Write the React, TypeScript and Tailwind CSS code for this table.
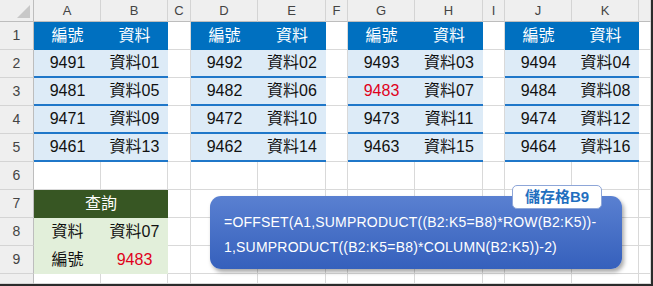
import React from 'react'

const COLS = ['', 'A', 'B', 'C', 'D', 'E', 'F', 'G', 'H', 'I', 'J', 'K', '']

const tables = [
  { col: 1, rows: [['9491', '資料01'], ['9481', '資料05'], ['9471', '資料09'], ['9461', '資料13']] },
  { col: 4, rows: [['9492', '資料02'], ['9482', '資料06'], ['9472', '資料10'], ['9462', '資料14']] },
  { col: 7, rows: [['9493', '資料03'], ['9483', '資料07'], ['9473', '資料11'], ['9463', '資料15']] },
  { col: 10, rows: [['9494', '資料04'], ['9484', '資料08'], ['9474', '資料12'], ['9464', '資料16']] },
]

const font = { fontFamily: '"Liberation Sans", "Noto Sans CJK TC", sans-serif' }

type CellInfo = { text?: string; kind: 'plain' | 'head' | 'data' | 'qhead' | 'qdata'; red?: boolean; span?: number; skip?: boolean }

function cellAt(r: number, c: number): CellInfo {
  // r = sheet row (1..10), c = column index (1..12)
  for (const t of tables) {
    if (c === t.col || c === t.col + 1) {
      const i = c - t.col
      if (r === 1) return { text: i === 0 ? '編號' : '資料', kind: 'head' }
      if (r >= 2 && r <= 5) {
        const txt = t.rows[r - 2][i]
        return { text: txt, kind: 'data', red: txt === '9483' }
      }
    }
  }
  if (r === 7 && c === 1) return { text: '查詢', kind: 'qhead', span: 2 }
  if (r === 7 && c === 2) return { kind: 'qhead', skip: true }
  if (r === 8 && c === 1) return { text: '資料', kind: 'qdata' }
  if (r === 8 && c === 2) return { text: '資料07', kind: 'qdata' }
  if (r === 9 && c === 1) return { text: '編號', kind: 'qdata' }
  if (r === 9 && c === 2) return { text: '9483', kind: 'qdata', red: true }
  return { kind: 'plain' }
}

const kindClass: Record<CellInfo['kind'], string> = {
  plain: 'bg-white border-r border-b border-[#d9d9d9]',
  head: 'bg-[#0070c0] text-white',
  data: 'bg-[#ddebf7] text-[#111] border-b-2 border-[#1f77c9]',
  qhead: 'bg-[#375623] text-white',
  qdata: 'bg-[#e2efda] text-[#111]',
}

export default function App() {
  const rows = [1, 2, 3, 4, 5, 6, 7, 8, 9, 10]

  return (
    <div className="relative w-[653px] h-[286px] overflow-hidden bg-white border-r-2 border-b-2 border-[#2b2b2b]" style={font}>
      <div className="grid grid-cols-[34px_67px_67px_23px_67px_68px_22px_67px_68px_22px_67px_67px_12px] grid-rows-[22px_repeat(9,28px)_10px]">
        {/* column header strip */}
        {COLS.map((name, c) =>
          c === 0 ? (
            <div key="corner" className="relative bg-[#efefef] border-r border-b border-[#bdbdbd]">
              <div className="absolute right-[3px] bottom-[3px] w-0 h-0 border-l-[13px] border-l-transparent border-b-[13px] border-b-[#c8c8c8]" />
            </div>
          ) : (
            <div
              key={'h' + c}
              className="flex items-center justify-center bg-[#efefef] border-r border-b border-[#d4d4d4] border-b-[#bdbdbd] text-[13px] text-[#444]"
            >
              {name}
            </div>
          )
        )}

        {rows.map((r) =>
          COLS.map((_, c) => {
            if (c === 0) {
              return (
                <div
                  key={r + '-rh'}
                  className="flex items-center justify-center bg-[#efefef] border-r border-b border-[#d4d4d4] border-r-[#bdbdbd] text-[14px] text-[#444]"
                >
                  {r < 10 ? r : ''}
                </div>
              )
            }
            const info = cellAt(r, c)
            if (info.skip) return null
            return (
              <div
                key={r + '-' + c}
                className={`flex items-center justify-center text-[16px] ${kindClass[info.kind]} ${
                  info.span === 2 ? 'col-span-2' : ''
                } ${info.red ? '!text-[#e0001b]' : ''}`}
              >
                {info.text}
              </div>
            )
          })
        )}
      </div>

      {/* formula callout */}
      <div className="absolute left-[210px] top-[196px] w-[412px] h-[73px] rounded-[11px] bg-gradient-to-b from-[#5a80d1] to-[#3560bc] shadow-[2px_3px_4px_rgba(0,0,0,0.35)] pl-[14px] pt-[14px] text-white text-[14px] tracking-[0.2px] leading-[25px]">
        <div>=OFFSET(A1,SUMPRODUCT((B2:K5=B8)*ROW(B2:K5))-</div>
        <div>1,SUMPRODUCT((B2:K5=B8)*COLUMN(B2:K5))-2)</div>
      </div>
      <div className="absolute left-[512px] top-[185px] w-[90px] h-[24px] flex items-center justify-center rounded-[5px] bg-white border border-[#8ea6d8] text-[#1f6fbf] text-[15px] font-bold">
        儲存格B9
      </div>
    </div>
  )
}
